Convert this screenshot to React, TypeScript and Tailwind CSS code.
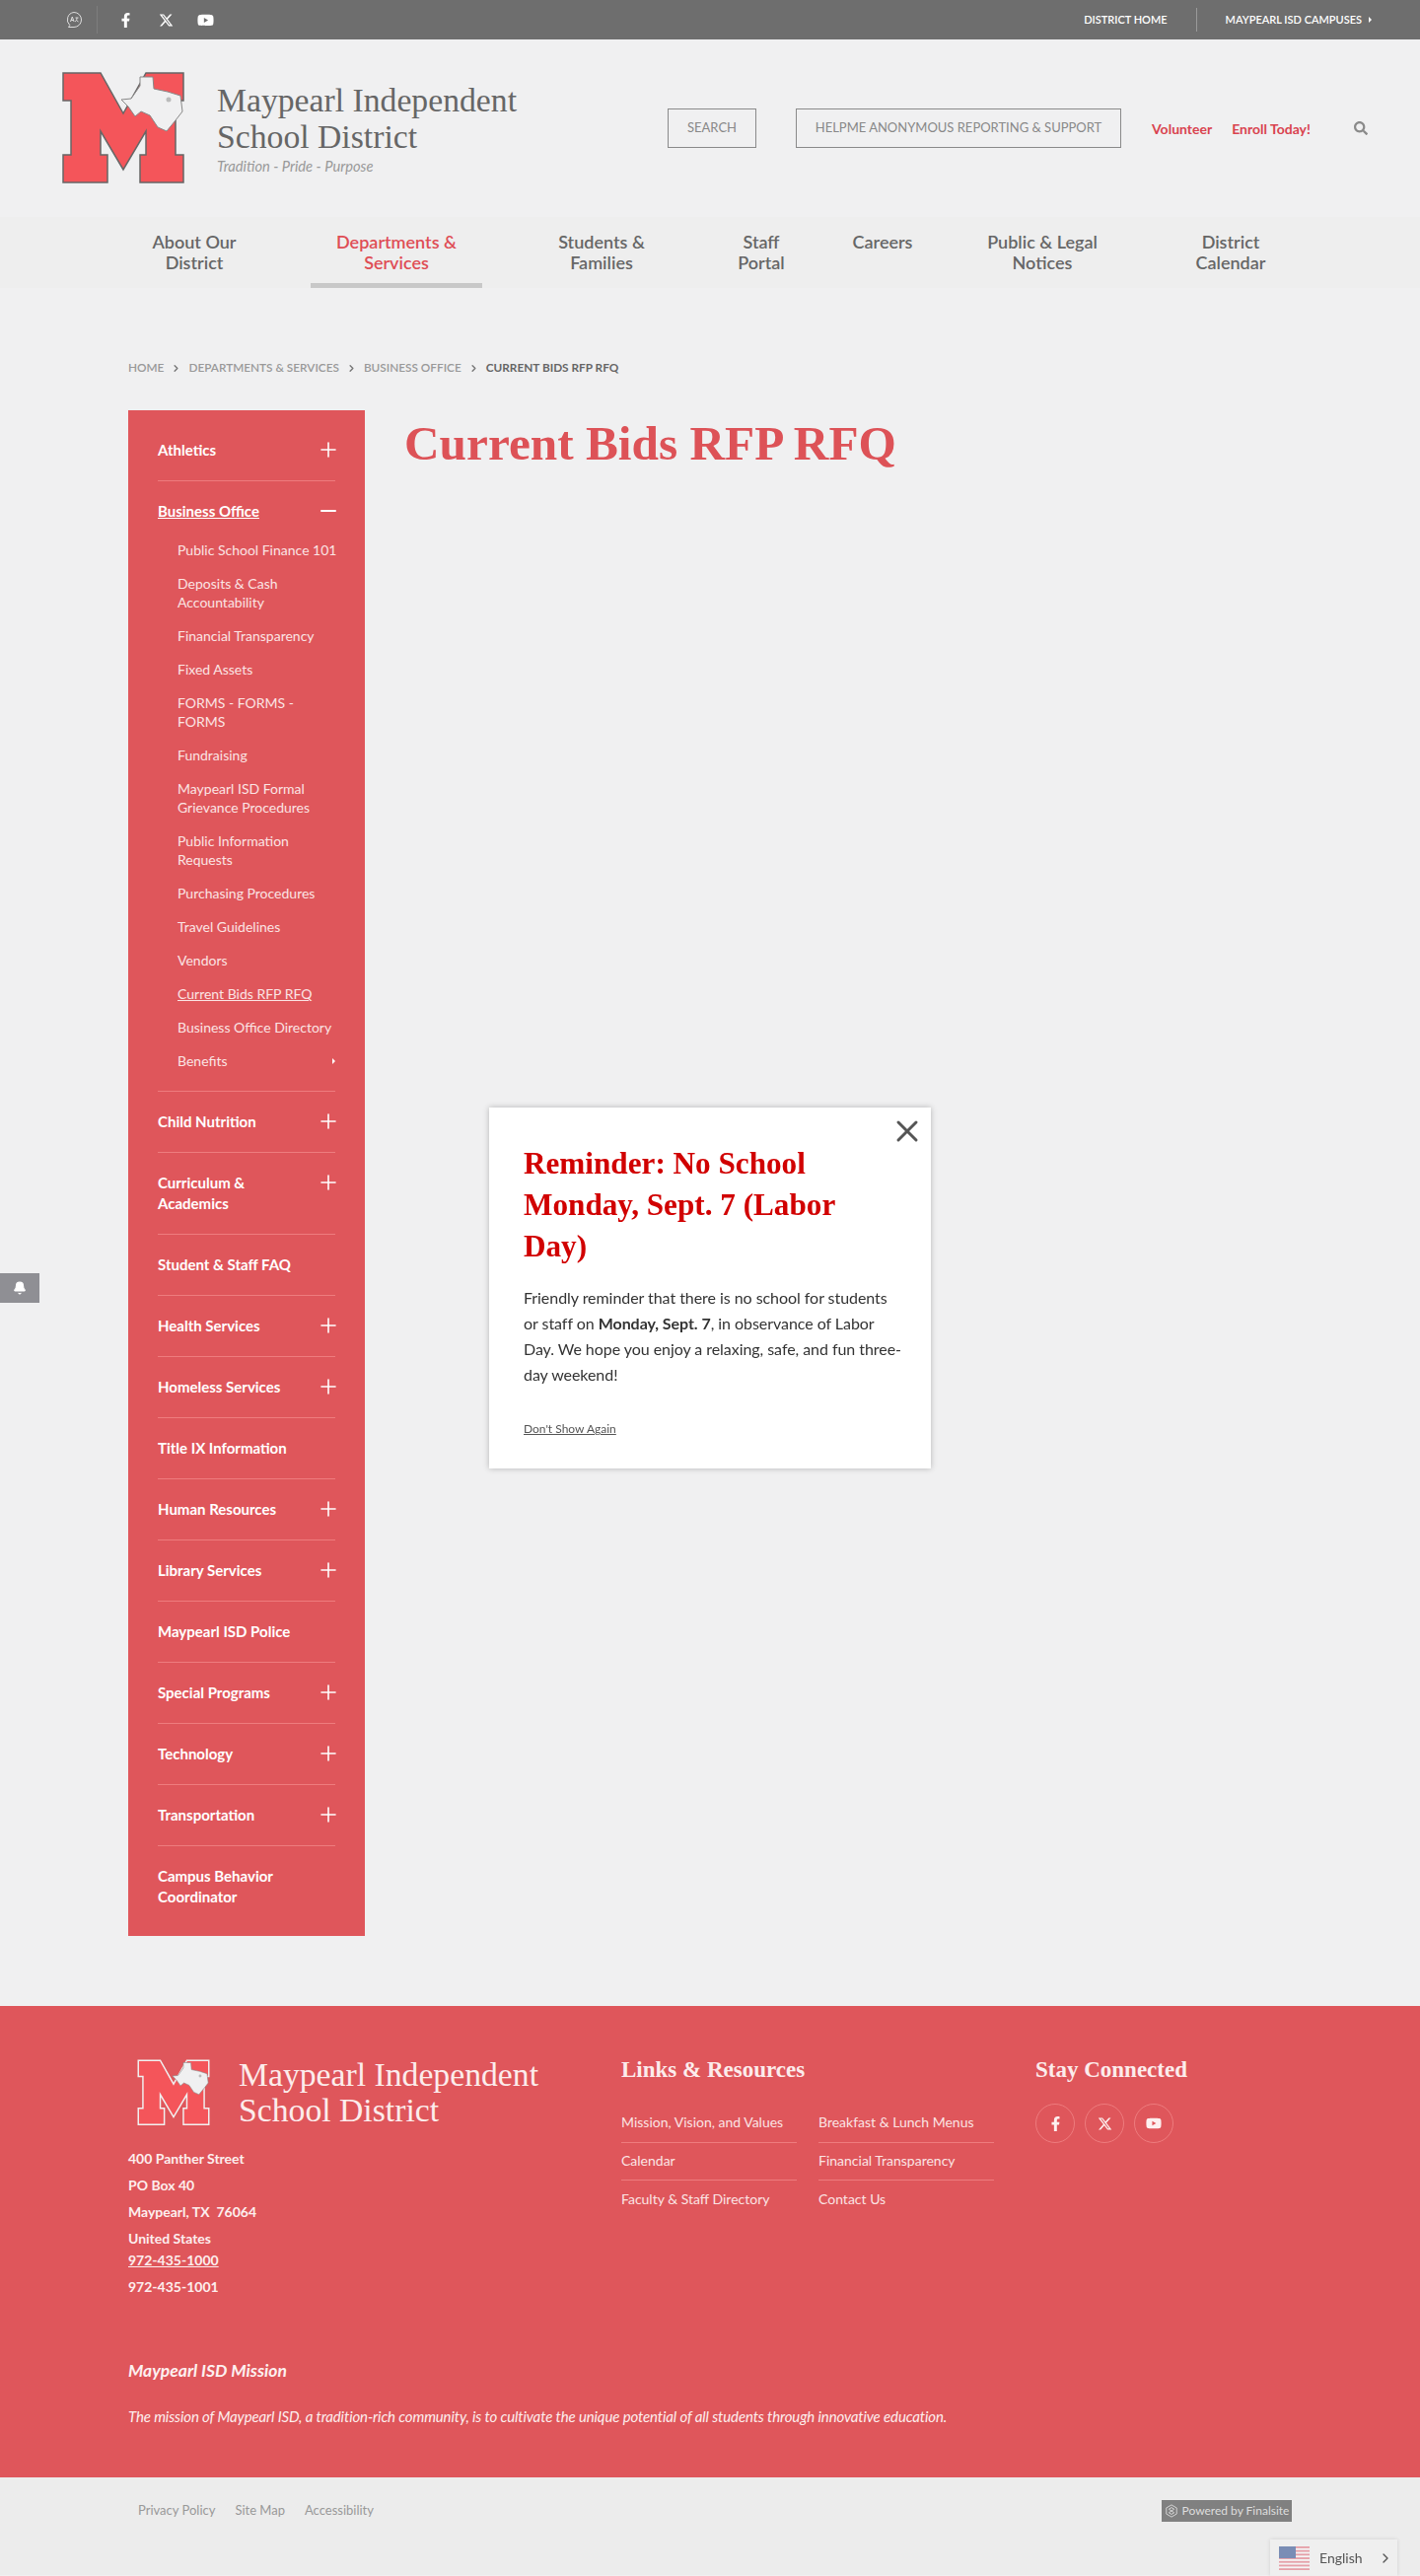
import { ChevronRight, Plus, Minus, X, Bell } from "lucide-react"
import { FaFacebookF, FaYoutube, FaSearch } from "react-icons/fa"
import { FaXTwitter } from "react-icons/fa6"

const serif = "font-['Liberation_Serif',serif]"

const NAV = [
  { w: "w-[194px]", lines: ["About Our", "District"] },
  { w: "w-[216px]", lines: ["Departments &", "Services"], active: true },
  { w: "w-[200px]", lines: ["Students &", "Families"] },
  { w: "w-[124px]", lines: ["Staff", "Portal"] },
  { w: "w-[122px]", lines: ["Careers"] },
  { w: "w-[202px]", lines: ["Public & Legal", "Notices"] },
  { w: "w-[180px]", lines: ["District", "Calendar"] },
]

const SUB = [
  "Public School Finance 101",
  "Deposits & Cash Accountability",
  "Financial Transparency",
  "Fixed Assets",
  "FORMS - FORMS - FORMS",
  "Fundraising",
  "Maypearl ISD Formal Grievance Procedures",
  "Public Information Requests",
  "Purchasing Procedures",
  "Travel Guidelines",
  "Vendors",
  "Current Bids RFP RFQ",
  "Business Office Directory",
  "Benefits",
]

const AFTER = [
  { t: "Child Nutrition", plus: true },
  { t: "Curriculum & Academics", plus: true, narrow: true },
  { t: "Student & Staff FAQ" },
  { t: "Health Services", plus: true },
  { t: "Homeless Services", plus: true },
  { t: "Title IX Information" },
  { t: "Human Resources", plus: true },
  { t: "Library Services", plus: true },
  { t: "Maypearl ISD Police" },
  { t: "Special Programs", plus: true },
  { t: "Technology", plus: true },
  { t: "Transportation", plus: true },
  { t: "Campus Behavior Coordinator", narrow: true },
]

function Logo({ footer }: { footer?: boolean }) {
  return (
    <svg viewBox="-2 -2 126 116" className={footer ? "h-[68px] w-[80px]" : "h-[116px] w-[126px]"}>
      <polygon
        points="0,0 38,0 61,41 84,0 122,0 122,28 114,28 114,83 122,83 122,111 78,111 78,83 84,83 84,59 61,98 38,59 38,83 45,83 45,111 0,111 0,83 8,83 8,28 0,28"
        fill="#f4555a"
        stroke={footer ? "#f0f0f0" : "#666"}
        strokeWidth={footer ? 2.5 : 1.5}
      />
      <polygon
        points="78,4 91,4 92,16 106,19 119,23 121,39 114,48 105,59 96,55 88,43 79,39 73,44 66,34 59,27 69,26 78,13"
        fill="#f0f0f1"
        stroke="#888"
        strokeWidth="1"
      />
      <circle cx="107" cy="27" r="2.5" fill="#bbb" />
    </svg>
  )
}

function SideRow({ t, plus, narrow, last }: { t: string; plus?: boolean; narrow?: boolean; last?: boolean }) {
  return (
    <div className={`flex justify-between py-5 ${last ? "" : "border-b border-[#ee7c7e]"}`}>
      <span className={`text-[15px] font-bold leading-[21px] text-white ${narrow ? "w-[120px]" : ""}`}>{t}</span>
      {plus && <Plus size={24} strokeWidth={1.6} className="-my-[2px] -mr-[5px] shrink-0 text-white" />}
    </div>
  )
}

export default function App() {
  return (
    <div className="relative min-h-[2612px] overflow-hidden bg-[#f0f0f1] font-['Lato',sans-serif]">
      {/* top bar */}
      <div className="flex h-10 items-center justify-between bg-[#6e6e6e] pl-[66px] pr-[49px] text-white">
        <div className="flex items-center">
          <svg viewBox="0 0 18 18" className="h-[18px] w-[18px] text-[#ddd]" fill="none" stroke="currentColor" strokeWidth="1">
            <path d="M9 1.5a7.5 7.5 0 0 1 0 15H3.5l1.3-2A7.5 7.5 0 0 1 9 1.5z" />
            <path d="M5.5 11l1.8-5 1.8 5M6.2 9.5h2.2M10.5 7h3M12 7c0 2-1 3.5-2 4M11.5 9.5l2 1.5" />
          </svg>
          <span className="ml-[14px] h-[28px] w-px bg-[#7d7d7d]" />
          <FaFacebookF size={15} className="ml-[21px]" />
          <FaXTwitter size={15} className="ml-[26px]" />
          <FaYoutube size={17} className="ml-[24px]" />
        </div>
        <div className="flex items-center text-[11px] font-semibold uppercase">
          <span>District Home</span>
          <span className="mx-[29px] h-[24px] w-px bg-[#9a9a9a]" />
          <span>Maypearl ISD Campuses</span>
          <span className="ml-[7px] h-0 w-0 border-y-[3px] border-l-[3px] border-y-transparent border-l-white" />
        </div>
      </div>

      {/* header */}
      <div className="flex h-[180px] items-center bg-[#f0f0f1] pl-[62px]">
        <Logo />
        <div className="ml-[32px] w-[304px] whitespace-nowrap">
          <div className={`${serif} text-[33.7px] leading-[37px] text-[#666]`}>
            Maypearl Independent
            <br />
            School District
          </div>
          <div className="mt-[1px] text-[14.7px] italic leading-[20px] text-[#999]">Tradition - Pride - Purpose</div>
        </div>
        <div className="ml-[153px] flex h-10 w-[90px] items-center justify-center border border-[#8a8a8a] text-[13px] uppercase text-[#888]">Search</div>
        <div className="ml-[40px] flex h-10 w-[330px] items-center justify-center border border-[#8a8a8a] text-[13px] uppercase text-[#888]">HelpMe Anonymous Reporting &amp; Support</div>
        <span className="ml-[31px] text-[14px] font-bold text-[#d9434f]">Volunteer</span>
        <span className="ml-[20px] text-[14px] font-bold text-[#d9434f]">Enroll Today!</span>
        <FaSearch size={14} className="ml-[44px] text-[#8a8a8a]" />
      </div>

      {/* main nav */}
      <div className="flex h-[72px] bg-[#eeeeee] pl-[100px]">
        {NAV.map((n) => (
          <div key={n.lines[0]} className={`${n.w} relative pt-[15px] text-center text-[18px] font-semibold leading-[21px] ${n.active ? "text-[#df4d55]" : "text-[#666]"}`}>
            {n.lines.map((l) => (
              <div key={l}>{l}</div>
            ))}
            {n.active && <div className="absolute bottom-0 left-[21px] h-[5px] w-[174px] bg-[#c8c8c8]" />}
          </div>
        ))}
      </div>

      {/* breadcrumb */}
      <div className="flex items-center pl-[130px] pt-[72px] text-[11.8px] font-semibold uppercase leading-[18px] text-[#999]">
        <span>Home</span>
        <ChevronRight size={11} strokeWidth={3} className="mx-[7px] text-[#777]" />
        <span>Departments &amp; Services</span>
        <ChevronRight size={11} strokeWidth={3} className="mx-[7px] text-[#777]" />
        <span>Business Office</span>
        <ChevronRight size={11} strokeWidth={3} className="mx-[7px] text-[#777]" />
        <span className="font-bold text-[#666]">Current Bids RFP RFQ</span>
      </div>

      {/* content */}
      <div className="mt-[34px] flex pl-[130px]">
        <aside className="w-[240px] bg-[#df565b] px-[30px] pt-[10px] pb-[9px]">
          <SideRow t="Athletics" plus />
          <div className="border-b border-[#ee7c7e] pt-5 pb-[21px]">
            <div className="flex justify-between">
              <span className="text-[15px] font-bold leading-[21px] text-white underline">Business Office</span>
              <Minus size={24} strokeWidth={2} className="-my-[2px] -mr-[5px] text-white" />
            </div>
            <ul className="-mr-2 pt-[19px] pl-5">
              {SUB.map((s) => (
                <li key={s} className={`relative mb-[15px] text-[14px] leading-[19px] text-[#fbe4e4] last:mb-0 ${s === "Current Bids RFP RFQ" ? "underline" : ""} ${s.startsWith("Deposits") || s.startsWith("FORMS") || s.startsWith("Public Info") ? "w-[160px]" : ""}`}>
                  {s}
                  {s === "Benefits" && <span className="absolute right-2 top-[7px] h-0 w-0 border-y-[3px] border-l-[3px] border-y-transparent border-l-white" />}
                </li>
              ))}
            </ul>
          </div>
          {AFTER.map((r, i) => (
            <SideRow key={r.t} t={r.t} plus={r.plus} narrow={r.narrow} last={i === AFTER.length - 1} />
          ))}
        </aside>
        <h1 className={`${serif} ml-[40px] text-[49.3px] font-bold leading-[68px] text-[#dd5257]`}>Current Bids RFP RFQ</h1>
      </div>

      {/* footer */}
      <footer className="mt-[71px] h-[478px] bg-[#df565b] px-[130px] pt-[52px] text-white">
        <div className="flex h-[270px]">
          <div className="w-[500px]">
            <div className="flex items-center pl-[6px]">
              <Logo footer />
              <div className={`${serif} ml-[26px] whitespace-nowrap text-[33.7px] leading-[36px] text-[#fcecec]`}>
                Maypearl Independent
                <br />
                School District
              </div>
            </div>
            <div className="mt-[17px] text-[14px] font-bold leading-[27px] text-[#fdeeee]">
              <div>400 Panther Street</div>
              <div>PO Box 40</div>
              <div className="whitespace-pre">Maypearl, TX  76064</div>
              <div>United States</div>
              <div className="-mt-[5px] underline">972-435-1000</div>
              <div>972-435-1001</div>
            </div>
          </div>
          <div className="w-[420px]">
            <h2 className={`${serif} -mt-[2px] text-[23px] font-bold leading-[30px] text-[#fcecec]`}>Links &amp; Resources</h2>
            <div className="mt-[28px] grid w-[378px] grid-cols-2 gap-x-[22px] text-[14px] leading-[20px] text-[#fbe4e4]">
              {[
                ["Mission, Vision, and Values", "Breakfast & Lunch Menus"],
                ["Calendar", "Financial Transparency"],
                ["Faculty & Staff Directory", "Contact Us"],
              ].map((row, i) =>
                row.map((t) => (
                  <div key={t} className={i === 0 ? "h-[31px] border-b border-[#ee7c7e]" : i === 1 ? "h-[38px] border-b border-[#ee7c7e] pt-[8px]" : "pt-[9px]"}>
                    {t}
                  </div>
                )),
              )}
            </div>
          </div>
          <div>
            <h2 className={`${serif} -mt-[2px] text-[23px] font-bold leading-[30px] text-[#fcecec]`}>Stay Connected</h2>
            <div className="mt-[19px] flex gap-[10px]">
              {[<FaFacebookF size={15} />, <FaXTwitter size={15} />, <FaYoutube size={16} />].map((icon, i) => (
                <span key={i} className="flex h-10 w-10 items-center justify-center rounded-full border border-[#ee7c7e] text-[#fdf0f0]">
                  {icon}
                </span>
              ))}
            </div>
          </div>
        </div>
        <div className="mt-[36px] text-[17.5px] font-bold italic leading-[24px] text-[#fdf0f0]">Maypearl ISD Mission</div>
        <p className="mt-[23px] text-[15px] italic leading-[22px] tracking-[-0.13px] text-[#fdeeee]">
          The mission of Maypearl ISD, a tradition-rich community, is to cultivate the unique potential of all students through innovative education.
        </p>
      </footer>

      {/* bottom strip */}
      <div className="flex h-[99px] items-start justify-between bg-[#ececec] pl-[140px] pr-[130px] pt-[23px]">
        <div className="flex gap-5 text-[13px] leading-[20px] text-[#999]">
          <span>Privacy Policy</span>
          <span>Site Map</span>
          <span>Accessibility</span>
        </div>
        <div className="flex h-[22px] w-[132px] items-center justify-center gap-[4px] bg-[#808080] text-[12px] text-[#ddd]">
          <svg viewBox="0 0 16 16" className="h-[14px] w-[14px]" fill="none" stroke="currentColor" strokeWidth="1">
            <path d="M8 1l6 3.5v7L8 15l-6-3.5v-7z" />
            <path d="M5 6l3-2 3 2-3 2zM5 10l3-2 3 2-3 2z" />
          </svg>
          Powered by Finalsite
        </div>
      </div>

      {/* notification tab */}
      <div className="fixed left-0 top-[1291px] flex h-[30px] w-10 items-center justify-center bg-[#8f8f94]">
        <Bell size={14} fill="#fff" className="text-white" />
      </div>

      {/* popup */}
      <div className="fixed left-[496px] top-[1123px] h-[366px] w-[448px] bg-white px-[35px] pt-[36px] shadow-[0_0_6px_rgba(0,0,0,0.25)]">
        <X size={36} strokeWidth={2} className="absolute right-[6px] top-[6px] text-[#555]" />
        <h2 className={`${serif} text-[31.2px] font-bold leading-[42px] text-[#d10000]`}>
          Reminder: No School Monday, Sept. 7 (Labor Day)
        </h2>
        <p className="mt-[18px] whitespace-nowrap text-[16px] leading-[26px] tracking-[-0.05px] text-[#333]">
          Friendly reminder that there is no school for students
          <br />
          or staff on <b>Monday, Sept. 7</b>, in observance of Labor
          <br />
          Day. We hope you enjoy a relaxing, safe, and fun three-
          <br />
          day weekend!
        </p>
        <div className="mt-[33px] text-[12px] leading-[18px] text-[#555] underline">Don't Show Again</div>
      </div>

      {/* language picker */}
      <div className="fixed bottom-0 right-[23px] flex h-[37px] w-[129px] items-center bg-[#efefef] pl-[9px] shadow-[0_0_4px_rgba(0,0,0,0.12)]">
        <svg viewBox="0 0 31 24" className="h-[24px] w-[31px]">
          <rect width="31" height="24" fill="#f4f4f4" />
          {[0, 1, 2, 3, 4, 5, 6].map((i) => (
            <rect key={i} y={i * 3.7} width="31" height="1.85" fill="#e5a0a8" />
          ))}
          <rect width="17" height="12" fill="#7a8db5" />
        </svg>
        <span className="ml-[10px] text-[14px] text-[#555]">English</span>
        <ChevronRight size={16} strokeWidth={2} className="ml-[15px] text-[#555]" />
      </div>
    </div>
  )
}
